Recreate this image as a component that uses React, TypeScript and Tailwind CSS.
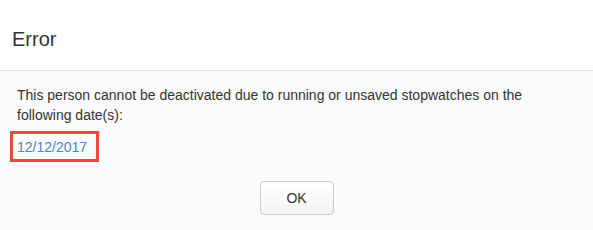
import React from "react";

export default function App() {
  return (
    <div className="w-[593px] h-[230px] bg-[#fafbfd] overflow-hidden" style={{ fontFamily: '"Liberation Sans", Arial, sans-serif' }}>
      <div className="h-[71px] bg-white border-b border-[#e1e3e6] pl-[12px] pt-[25px]">
        <h1 className="text-[20px] leading-[28px] text-[#333333]">Error</h1>
      </div>
      <div className="pl-[17px] pr-[17px] pt-[14px]">
        <p className="text-[14px] leading-[20px] text-[#333333]">
          This person cannot be deactivated due to running or unsaved stopwatches on the following date(s):
        </p>
        <div className="mt-[6px] ml-[-7px] w-[89px] h-[31px] border-[3px] border-[#f44343] pl-[4px] pt-[1px]">
          <span className="text-[14px] leading-[20px] text-[#4a86c8] whitespace-nowrap">12/12/2017</span>
        </div>
        <div className="flex justify-center mt-[19px] ml-[-17px] mr-[-17px]">
          <button className="w-[74px] h-[34px] rounded-[4px] border border-[#cccccc] bg-gradient-to-b from-white to-[#f3f3f3] text-[14px] text-[#333333]">
            OK
          </button>
        </div>
      </div>
    </div>
  );
}
